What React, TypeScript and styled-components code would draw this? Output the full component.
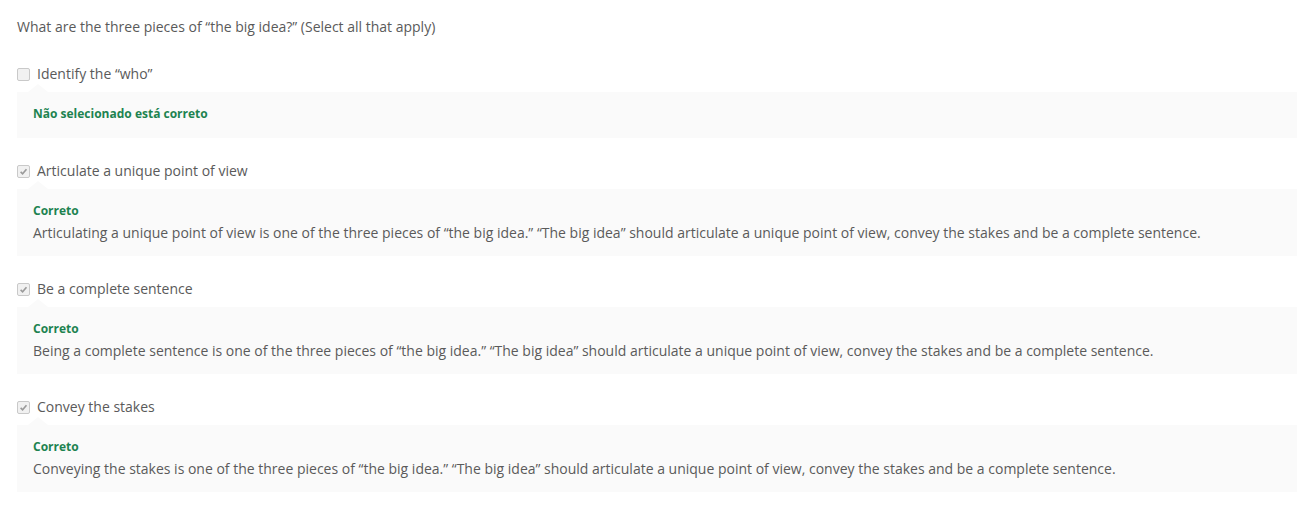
import { FC } from 'react';
import styled, { createGlobalStyle } from 'styled-components';

type OptionType = {
	label: string;
	checked: boolean;
	verdict: string;
	explanation?: string;
};

const options: OptionType[] = [
	{ label: 'Identify the “who”', checked: false, verdict: 'Não selecionado está correto' },
	{
		label: 'Articulate a unique point of view',
		checked: true,
		verdict: 'Correto',
		explanation:
			'Articulating a unique point of view is one of the three pieces of “the big idea.” “The big idea” should articulate a unique point of view, convey the stakes and be a complete sentence.',
	},
	{
		label: 'Be a complete sentence',
		checked: true,
		verdict: 'Correto',
		explanation:
			'Being a complete sentence is one of the three pieces of “the big idea.” “The big idea” should articulate a unique point of view, convey the stakes and be a complete sentence.',
	},
	{
		label: 'Convey the stakes',
		checked: true,
		verdict: 'Correto',
		explanation:
			'Conveying the stakes is one of the three pieces of “the big idea.” “The big idea” should articulate a unique point of view, convey the stakes and be a complete sentence.',
	},
];

const GlobalStyle = createGlobalStyle`
	body {
		margin: 0;
		background: #ffffff;
		font-family: 'Open Sans', 'Noto Sans', sans-serif;
		color: #555555;
	}
`;

const App: FC = () => {
	return (
		<Root>
			<GlobalStyle />
			<Question>What are the three pieces of “the big idea?” (Select all that apply)</Question>
			<OptionList>
				{options.map((option) => (
					<Option key={option.label}>
						<OptionLabel>
							<Checkbox>
								{option.checked && (
									<svg width='9' height='9' viewBox='0 0 10 10'>
										<path
											d='M1.8 5.4 L4 7.5 L8.3 2.4'
											fill='none'
											stroke='#9a9a9a'
											strokeWidth='1.8'
										/>
									</svg>
								)}
							</Checkbox>
							<span>{option.label}</span>
						</OptionLabel>
						<Feedback>
							<Verdict>{option.verdict}</Verdict>
							{option.explanation && <Explanation>{option.explanation}</Explanation>}
						</Feedback>
					</Option>
				))}
			</OptionList>
		</Root>
	);
};

const Root = styled.div`
	padding: 17px 0 20px 17px;
`;

const Question = styled.div`
	font-size: 14px;
	line-height: 20px;
	color: #5a5a5a;
	margin-bottom: 27px;
`;

const OptionList = styled.div`
	display: flex;
	flex-direction: column;
	gap: 23px;
`;

const Option = styled.div`
	display: flex;
	flex-direction: column;
	gap: 8px;
`;

const OptionLabel = styled.label`
	display: flex;
	align-items: center;
	gap: 7px;
	font-size: 14px;
	line-height: 20px;
	color: #5a5a5a;
`;

const Checkbox = styled.span`
	box-sizing: border-box;
	width: 13px;
	height: 13px;
	border: 1px solid #c9c9c9;
	border-radius: 2px;
	background: #f1f1f1;
	display: flex;
	align-items: center;
	justify-content: center;
`;

const Feedback = styled.div`
	position: relative;
	background: #fafafa;
	padding: 14px 16px 13px;

	&::before {
		content: '';
		position: absolute;
		top: -8px;
		left: 11px;
		border-left: 10px solid transparent;
		border-right: 10px solid transparent;
		border-bottom: 8px solid #fafafa;
	}
`;

const Verdict = styled.div`
	font-size: 12px;
	font-weight: 700;
	line-height: 16px;
	color: #1d8350;
	margin-bottom: 3px;
`;

const Explanation = styled.div`
	font-size: 14px;
	line-height: 21px;
	color: #5a5a5a;
`;

export default App;
